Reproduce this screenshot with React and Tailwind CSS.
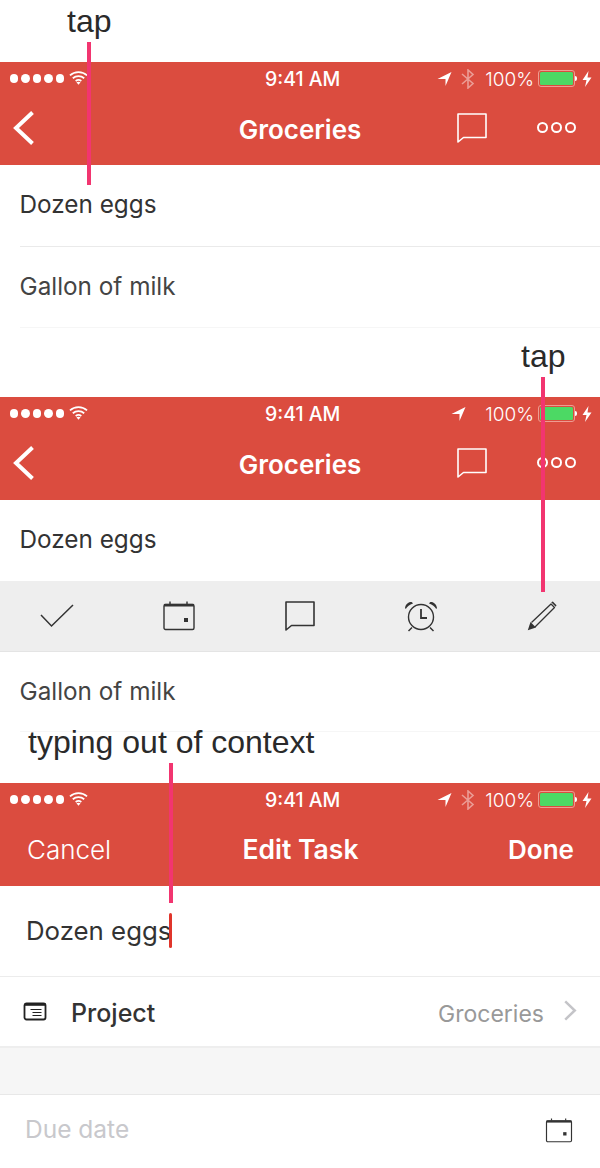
import React from 'react';

const SF = "font-['Inter','Liberation_Sans',sans-serif]";
const HELV = "font-['Liberation_Sans',Arial,sans-serif]";

function Bubble({ className, stroke = 'currentColor' }) {
  return (
    <svg viewBox="0 0 30 30" fill="none" className={className}>
      <path d="M1 1H29V24.5H6.5L1 29Z" stroke={stroke} strokeWidth="1.6" strokeLinejoin="round" />
    </svg>
  );
}

function CalendarIcon({ className, color = '#333' }) {
  return (
    <svg viewBox="0 0 32 30" fill="none" className={className}>
      <rect x="1" y="3.5" width="30" height="25" rx="1.5" stroke={color} strokeWidth="1.4" />
      <path d="M1 4.2H31" stroke={color} strokeWidth="2.6" />
      <path d="M7 0.5V3M24 0.5V3" stroke={color} strokeWidth="1.4" />
      <rect x="21" y="17" width="4" height="4" fill={color} />
    </svg>
  );
}

function StatusBar({ bluetooth = true }) {
  return (
    <div className="relative flex h-[31px] items-center pl-[10px] pr-[8px] pt-[2px] text-white">
      <div className="flex gap-[3px]">
        {[0, 1, 2, 3, 4].map((i) => (
          <span key={i} className="h-[8.4px] w-[8.4px] rounded-full bg-white" />
        ))}
      </div>
      <svg viewBox="0 0 20 15" className="ml-[5px] h-[15px] w-[19px] -translate-y-[1px]" fill="none" stroke="#fff" strokeWidth="1.8">
        <path d="M1 5.2C6 0.6 14 0.6 19 5.2" />
        <path d="M4 8.3C7.4 5.3 12.6 5.3 16 8.3" />
        <path d="M7 11.2C8.8 9.8 11.2 9.8 13 11.2" />
        <path d="M10 15L7.8 12.6C9 11.8 11 11.8 12.2 12.6Z" fill="#fff" stroke="none" />
      </svg>
      <span className={`absolute left-[265px] top-[8px] text-[19.5px] font-medium leading-none ${SF}`}>9:41 AM</span>
      <div className="ml-auto flex items-center">
        <svg viewBox="0 0 15 14" className={`h-[14px] w-[15px] ${bluetooth ? '' : 'mr-[9px]'}`}>
          <path d="M14.5 0L8.5 14V7H0.5Z" fill="#fff" />
        </svg>
        {bluetooth && (
          <svg viewBox="0 0 14 20" className="ml-[9px] h-[20px] w-[14px]" fill="none" stroke="#fff" strokeOpacity="0.45" strokeWidth="1.6">
            <path d="M1 5L12 14.5L7 19V1L12 5.5L1 15" />
          </svg>
        )}
        <span className={`ml-[10px] pt-[1px] text-[19px] font-light leading-none ${SF}`}>100%</span>
        <div className="ml-[4px] flex h-[17px] w-[37px] items-center rounded-[3px] border border-[#ee9c92] p-[1px]">
          <div className="h-full w-full rounded-[1.5px] bg-[#4cd964]" />
        </div>
        <span className="h-[5px] w-[2px] rounded-r-sm bg-white" />
        <svg viewBox="0 0 10 16" className="ml-[5px] h-[16px] w-[10px]">
          <path d="M6.5 0L0.5 9H4.5L3 16L9.5 6.5H5.5Z" fill="#fff" />
        </svg>
      </div>
    </div>
  );
}

function TaskHeader({ bluetooth }) {
  return (
    <div className="h-[103px] bg-[#db4c3f]">
      <StatusBar bluetooth={bluetooth} />
      <div className="relative flex h-[71px] items-center pb-[2px] text-white">
        <svg viewBox="0 0 22 36" fill="none" className="ml-[12px] h-[36px] w-[22px]">
          <path d="M20.5 2.5L4 18L20.5 33.5" stroke="#fff" strokeWidth="4" />
        </svg>
        <span className={`absolute inset-x-0 bottom-[21px] text-center text-[26px] font-semibold leading-none ${SF}`}>
          Groceries
        </span>
        <Bubble className="ml-[423px] mt-[1px] h-[30px] w-[30px]" />
        <div className="ml-[50px] flex gap-[3px]">
          {[0, 1, 2].map((i) => (
            <span key={i} className="h-[11px] w-[11px] rounded-full border-2 border-white" />
          ))}
        </div>
      </div>
    </div>
  );
}

function TaskRow({ text, className = '', textClass = '-mt-[2px]', color = 'text-[#333]', line = 'border-[#eaeaea]' }) {
  return (
    <div className={`ml-5 flex items-center border-b ${line} ${className}`}>
      <span className={`-ml-[0.5px] text-[24.3px] leading-none ${textClass} ${SF} ${color}`}>{text}</span>
    </div>
  );
}

function Label({ children, className = '' }) {
  return <div className={`absolute leading-none text-[#2a2a2a] ${HELV} ${className}`}>{children}</div>;
}

function Pointer({ className }) {
  return <div className={`absolute w-1 bg-[#f23570] ${className}`} />;
}

function Toolbar() {
  return (
    <div className="flex h-[71px] items-center justify-between border-b border-[#e4e4e4] bg-[#eeeeee] pl-[40px] pr-[43px] text-[#333]">
      <svg viewBox="0 0 34 24" fill="none" className="h-[24px] w-[34px]">
        <path d="M1 11L11.5 22L33 1" stroke="#333" strokeWidth="1.5" />
      </svg>
      <CalendarIcon className="h-[30px] w-[32px]" />
      <Bubble className="h-[30px] w-[30px]" stroke="#333" />
      <svg viewBox="0 0 34 32" fill="none" className="mt-[1px] h-[32px] w-[34px]">
        <circle cx="17" cy="16" r="12.5" stroke="#333" strokeWidth="1.4" />
        <path d="M17 8V17H23" stroke="#333" strokeWidth="1.8" />
        <path d="M1 7C1.5 3 5 0.5 8 1.2L9 2.5C5.5 3.5 3.2 5.5 1.8 8Z" fill="#333" />
        <path d="M33 7C32.5 3 29 0.5 26 1.2L25 2.5C28.5 3.5 30.8 5.5 32.2 8Z" fill="#333" />
        <path d="M8 26.5L4.5 30M26 26.5L29.5 30" stroke="#333" strokeWidth="1.5" />
      </svg>
      <svg viewBox="0 0 30 30" fill="none" className="h-[30px] w-[30px]">
        <path d="M4.5 21.5L24 3L27.5 6.5L8 26" stroke="#333" strokeWidth="1.3" strokeLinejoin="round" />
        <path d="M24.2 1.2L25.8 0.5L29.5 4.2L28.8 5.8Z" fill="#333" />
        <path d="M0.8 29.2L3.5 21L9 26.5Z" fill="#333" />
      </svg>
    </div>
  );
}

function EditHeader() {
  return (
    <div className="h-[103px] bg-[#db4c3f]">
      <StatusBar />
      <div className="grid h-[71px] grid-cols-3 items-center pl-[27px] pr-[26px] text-white">
        <span className={`text-[26px] font-light leading-none ${SF}`}>Cancel</span>
        <span className={`whitespace-nowrap text-center text-[26.5px] font-semibold leading-none ${SF}`}>Edit Task</span>
        <span className={`text-right text-[26px] font-semibold leading-none ${SF}`}>Done</span>
      </div>
    </div>
  );
}

export default function App() {
  return (
    <div className="relative h-[1168px] w-[600px] overflow-hidden bg-white">
      <div className="h-[62px]" />
      <TaskHeader />
      <TaskRow text="Dozen eggs" className="h-[82px]" />
      <TaskRow text="Gallon of milk" textClass="-mt-[2px]" color="text-[#444]" line="border-[#f6f6f6]" className="h-[81px]" />

      <div className="h-[69px]" />
      <TaskHeader bluetooth={false} />
      <div className="flex h-[81px] items-center pl-5">
        <span className={`-mt-[2px] -ml-[0.5px] text-[24.3px] leading-none text-[#333] ${SF}`}>Dozen eggs</span>
      </div>
      <Toolbar />
      <TaskRow text="Gallon of milk" textClass="" color="text-[#444]" line="border-[#f6f6f6]" className="h-[80px]" />

      <div className="h-[51px]" />
      <EditHeader />
      <div className="flex h-[91px] items-center border-b border-[#ececec] pl-[26px]">
        <span className={`text-[25.8px] leading-none text-[#333] ${SF}`}>Dozen eggs</span>
      </div>
      <div className="flex h-[71px] items-center border-b-2 border-[#eeeeee] pl-[23px] pr-[23px]">
        <svg viewBox="0 0 23 19" fill="none" className="h-[19px] w-[24px]">
          <rect x="1" y="1.5" width="21" height="16" rx="2" stroke="#222" strokeWidth="1.8" />
          <path d="M1 2.5H22" stroke="#222" strokeWidth="2.6" />
          <path d="M7 7.5H18M9 10.5H18M9 13.5H18" stroke="#222" strokeWidth="1.2" />
        </svg>
        <span className={`ml-[24px] pt-[3px] text-[25px] font-medium leading-none text-[#333] ${SF}`}>Project</span>
        <span className={`ml-auto pt-[5px] text-[23px] leading-none text-[#999] ${SF}`}>Groceries</span>
        <svg viewBox="0 0 14 22" fill="none" className="ml-[19px] mb-[3px] h-[21px] w-[14px]">
          <path d="M2 1.5L12 11L2 20.5" stroke="#c4c4c8" strokeWidth="2.6" />
        </svg>
      </div>
      <div className="h-[47px] border-b border-[#e8e8e8] bg-[#f6f6f6]" />
      <div className="flex h-[73px] items-center pl-[25px] pr-[27px]">
        <span className={`-mt-[4px] text-[24.5px] leading-none text-[#c8c8cc] ${SF}`}>Due date</span>
        <CalendarIcon className="ml-auto -mt-[2px] h-[25px] w-[28px]" />
      </div>

      <Label className="left-[67px] top-[5px] text-[32px]">tap</Label>
      <Label className="left-[521px] top-[340px] text-[32px]">tap</Label>
      <Label className="left-[28px] top-[726px] text-[32px]">typing out of context</Label>
      <Pointer className="left-[87px] top-[42px] h-[143px]" />
      <Pointer className="left-[541px] top-[377px] h-[215px]" />
      <Pointer className="left-[169px] top-[763px] h-[140px]" />
      <div className="absolute left-[169px] top-[913px] h-[35px] w-[3px] rounded-full bg-[#e0352b]" />
    </div>
  );
}
